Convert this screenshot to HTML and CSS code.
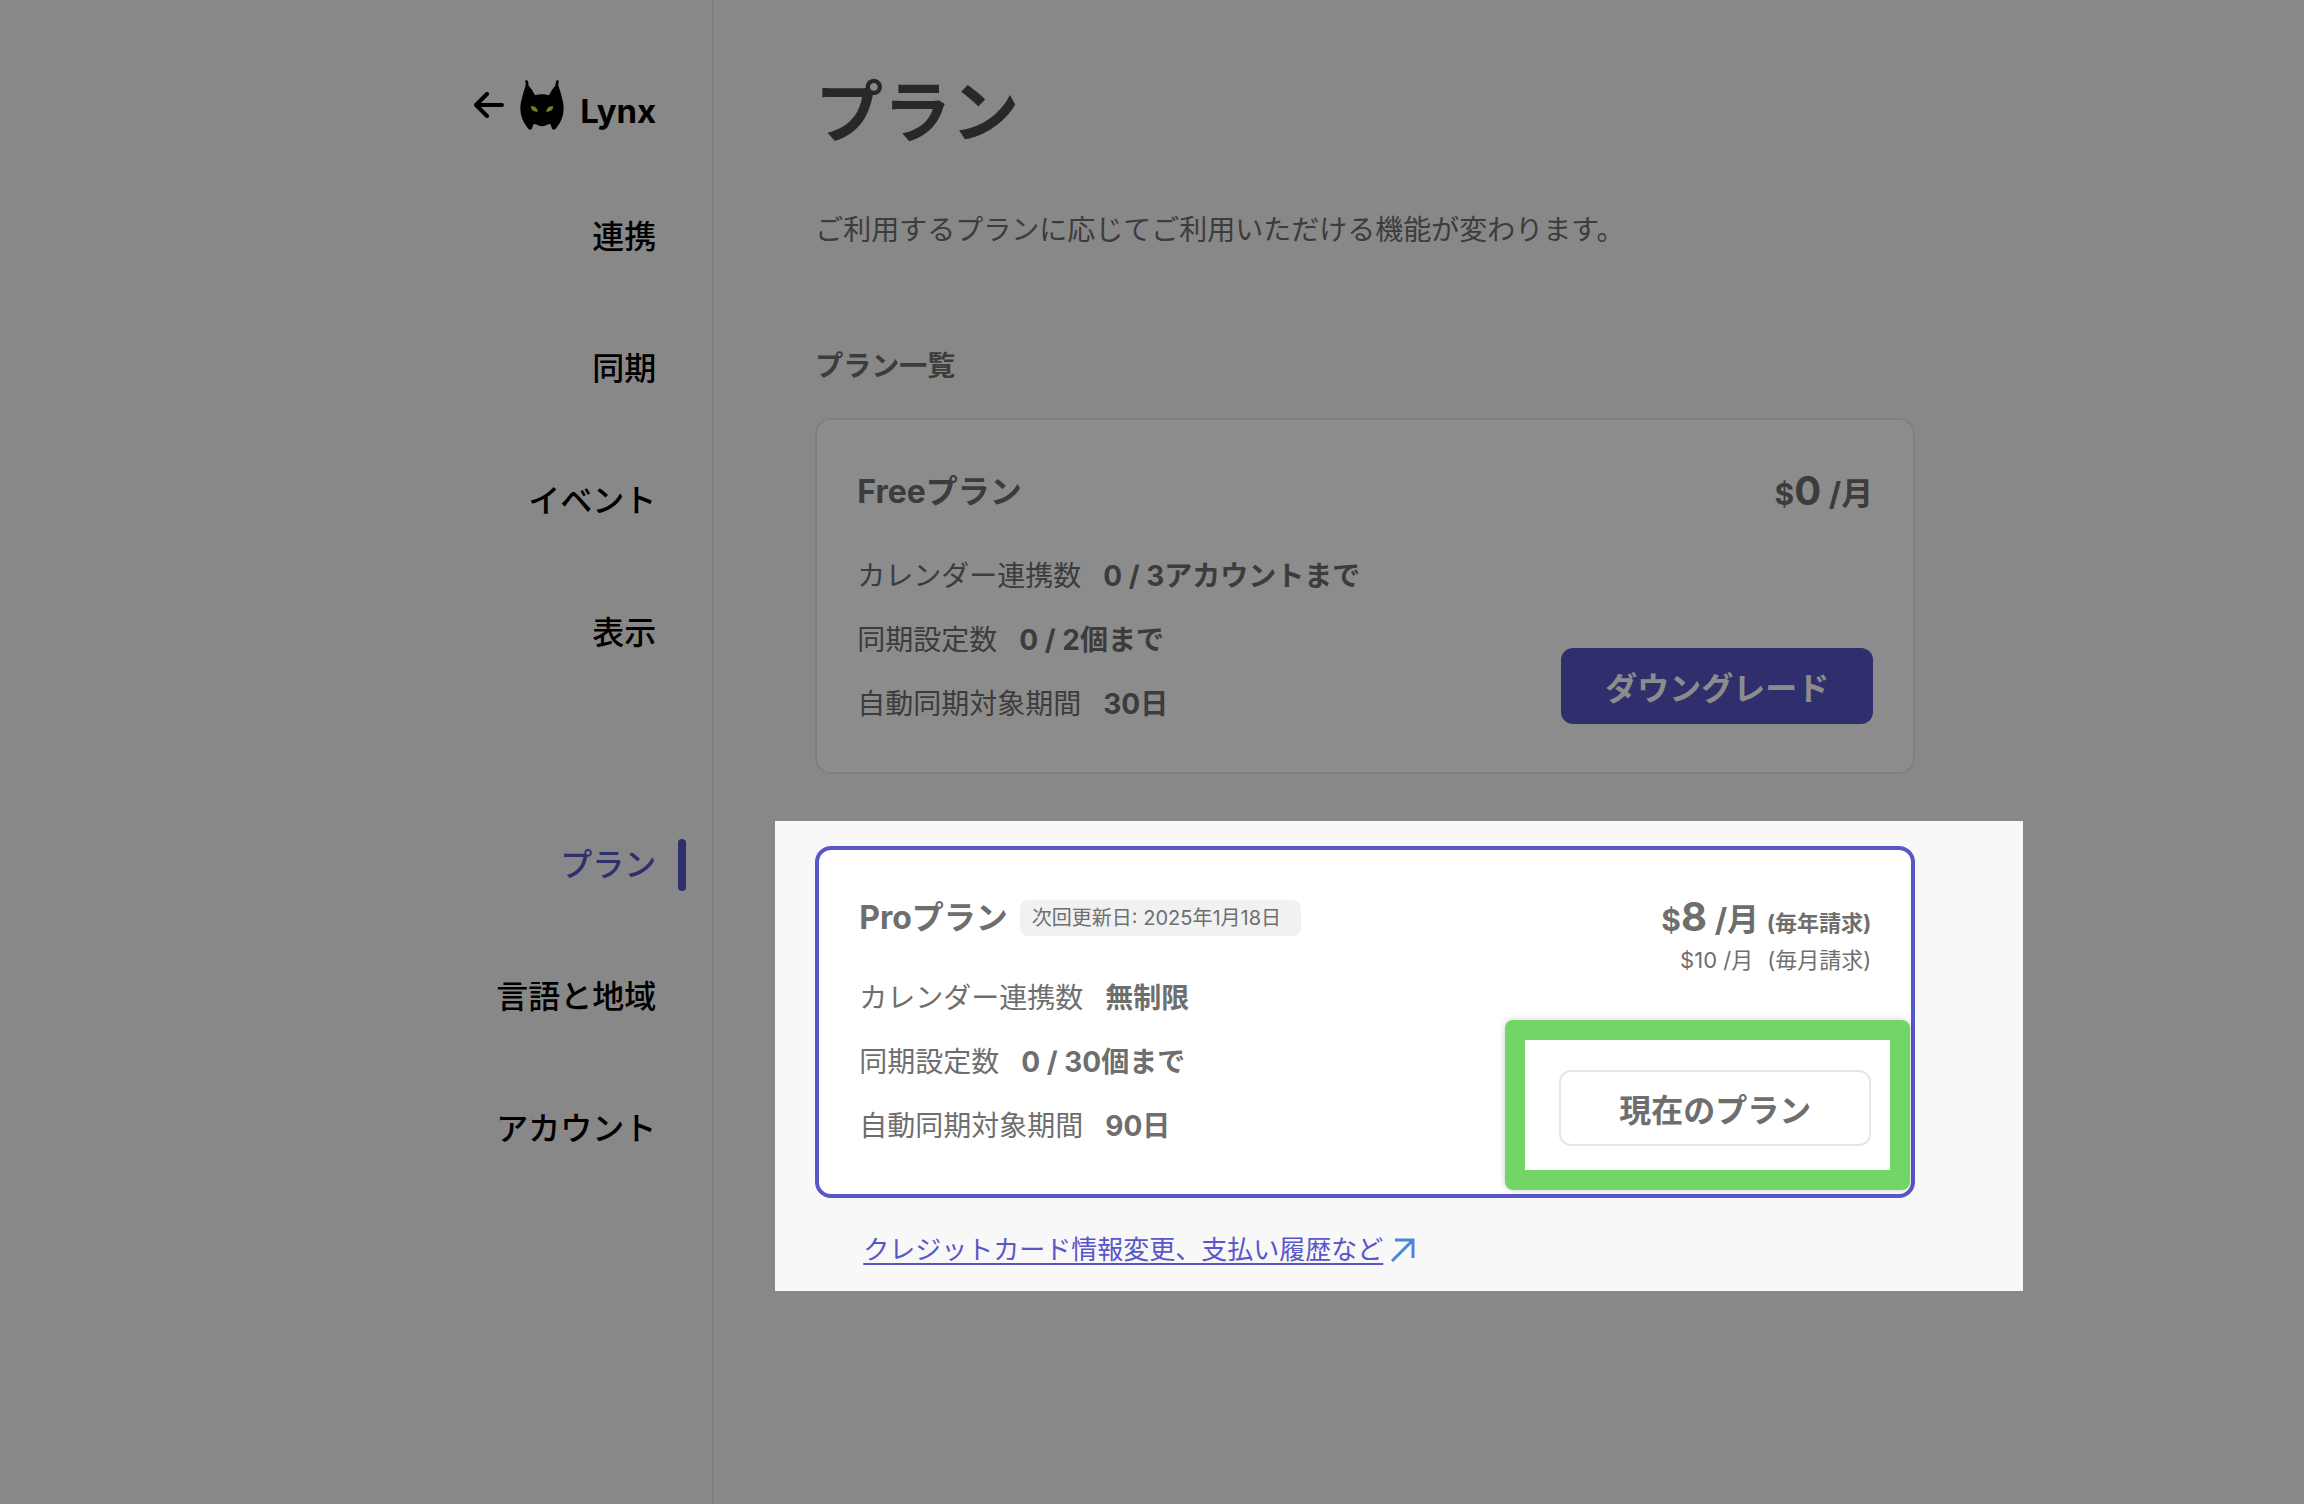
FILE: index.html
```html
<!DOCTYPE html>
<html lang="ja">
<head>
  <meta charset="UTF-8">
  <meta name="viewport" content="width=device-width, initial-scale=1">
  <title>プラン | Lynx</title>
  <link rel="stylesheet" href="styles.css">
</head>
<body>
  <div class="layout">
    <aside class="sidebar">
      <a class="brand" href="#">
        <svg class="back-icon" viewBox="0 0 30 26" aria-hidden="true">
          <path d="M28 13H2M13 2L2 13l11 11"/>
        </svg>
        <svg class="logo" viewBox="0 0 44 50" aria-hidden="true">
          <path d="M5.2 .6Q6.8-.4 8 1L8.6 5.4Q12 9 15 15.3Q22 13.2 29 15.3Q32 9 35.4 5.4L36 1Q37.2-.4 38.8 .6L38.2 5Q41 13 43 22Q46 37 35.5 49Q34 50.6 32.2 49L30.4 44Q27 44 25.5 45.6Q22 46.8 18.5 45.6Q17 44 13.6 44L11.8 49Q10 50.6 8.5 49Q-2 37 1 22Q3 13 5.8 5Z"/>
          <path class="eye" d="M10.7 26.3Q16.5 25.5 18 31.6Q11.5 32.5 10.7 26.3ZM33.3 26.3Q27.5 25.5 26 31.6Q32.5 32.5 33.3 26.3Z"/>
        </svg>
        <span class="brand-name">Lynx</span>
      </a>
      <nav class="menu">
        <a href="#">連携</a>
        <a href="#">同期</a>
        <a href="#">イベント</a>
        <a href="#">表示</a>
      </nav>
      <nav class="menu menu-account">
        <a class="active" href="#">プラン</a>
        <a href="#">言語と地域</a>
        <a href="#">アカウント</a>
      </nav>
    </aside>

    <main class="content">
      <h1>プラン</h1>
      <p class="description">ご利用するプランに応じてご利用いただける機能が変わります。</p>
      <h2>プラン一覧</h2>

      <section class="card">
        <div class="plan">
          <h3>Freeプラン</h3>
          <ul class="features">
            <li>カレンダー連携数<strong>0 / 3アカウントまで</strong></li>
            <li>同期設定数<strong>0 / 2個まで</strong></li>
            <li>自動同期対象期間<strong>30日</strong></li>
          </ul>
        </div>
        <div class="side">
          <p class="price"><span class="currency">$</span><span class="amount">0</span> /月</p>
          <button class="btn btn-primary" type="button">ダウングレード</button>
        </div>
      </section>

      <div class="current">
        <section class="card card-current">
          <div class="plan">
            <div class="plan-title">
              <h3>Proプラン</h3>
              <span class="badge">次回更新日: 2025年1月18日</span>
            </div>
            <ul class="features">
              <li>カレンダー連携数<strong>無制限</strong></li>
              <li>同期設定数<strong>0 / 30個まで</strong></li>
              <li>自動同期対象期間<strong>90日</strong></li>
            </ul>
          </div>
          <div class="side">
            <div>
              <p class="price"><span class="currency">$</span><span class="amount">8</span> /月 <span class="cycle">(毎年請求)</span></p>
              <p class="price-monthly"><span>$10 /月</span><span>(毎月請求)</span></p>
            </div>
            <div class="action">
              <button class="btn btn-outline" type="button">現在のプラン</button>
              <div class="marker"></div>
            </div>
          </div>
        </section>
        <p class="billing">
          <a href="#">クレジットカード情報変更、支払い履歴など</a>
          <svg class="external-icon" viewBox="0 0 24 24" aria-hidden="true">
            <path d="M1 23L22 2M4 2h18v18"/>
          </svg>
        </p>
        <div class="spotlight"></div>
      </div>
    </main>
  </div>
</body>
</html>
```

FILE: styles.css
```css
* {
  box-sizing: border-box;
}

body {
  margin: 0;
  font-family: Inter, "Noto Sans CJK JP", sans-serif;
  background-color: #f8f8f8;
  color: #6e6e6e;
  font-size: 28px;
  line-height: 40px;
}

h1, h2, h3, p, ul {
  margin: 0;
  padding: 0;
}

.layout {
  display: grid;
  grid-template-columns: 31fr 69fr;
  min-height: 100vh;
}

/* sidebar */
.sidebar {
  padding: 79px 26px 40px 0;
  border-right: 2px solid #e5e5e8;
}

.brand {
  display: flex;
  justify-content: flex-end;
  align-items: center;
  gap: 16px;
  height: 52px;
  padding-right: 30px;
  color: #000;
  text-decoration: none;
}

.back-icon {
  width: 30px;
  height: 26px;
  fill: none;
  stroke: #000;
  stroke-width: 4;
  stroke-linecap: round;
  stroke-linejoin: round;
}

.logo {
  width: 44px;
  height: 50px;
}

.eye {
  fill: #e0e83c;
}

.brand-name {
  align-self: flex-end;
  font-size: 33px;
  font-weight: 700;
}

.menu {
  display: flex;
  flex-direction: column;
  gap: 80px;
  margin-top: 80px;
}

.menu-account {
  margin-top: 180px;
}

.menu a {
  display: flex;
  justify-content: flex-end;
  gap: 22px;
  color: #000;
  font-size: 32px;
  font-weight: 500;
  line-height: 52px;
  text-decoration: none;
}

.menu a::after {
  content: "";
  width: 8px;
  border-radius: 4px;
}

.menu a.active {
  color: #5856c8;
}

.menu a.active::after {
  background-color: #5856c8;
}

/* content */
.content {
  max-width: 1201px;
  padding: 64px 0 64px 101px;
}

h1 {
  color: #4a4a4a;
  font-size: 68px;
  line-height: 96px;
}

.description {
  margin-top: 50px;
}

h2 {
  margin: 96px 0 32px;
  font-size: 28px;
}

.card {
  display: flex;
  justify-content: space-between;
  padding: 48px 40px;
  background-color: #fff;
  border: 2px solid #e8e8e8;
  border-radius: 16px;
}

.card-current {
  padding-top: 44px;
  border: 4px solid #5856c8;
}

h3 {
  font-size: 32px;
  line-height: 48px;
}

.plan-title {
  display: flex;
  align-items: center;
  gap: 12px;
}

.badge {
  padding: 0 20px 0 12px;
  background-color: #f1f1f1;
  border-radius: 8px;
  font-size: 20px;
  line-height: 36px;
}

.features {
  display: flex;
  flex-direction: column;
  gap: 24px;
  margin-top: 40px;
  list-style: none;
}

.card-current .features {
  margin-top: 36px;
}

.features strong {
  margin-left: 22px;
}

.side {
  display: flex;
  flex-direction: column;
  justify-content: space-between;
  align-items: flex-end;
  text-align: right;
}

.price {
  font-size: 32px;
  font-weight: 700;
  line-height: 46px;
}

.currency {
  font-size: 30px;
}

.amount {
  font-size: 40px;
}

.cycle {
  font-size: 22px;
}

.price-monthly {
  display: flex;
  justify-content: flex-end;
  gap: 14px;
  font-size: 22px;
  line-height: 28px;
}

.btn {
  display: block;
  width: 312px;
  height: 76px;
  border: none;
  border-radius: 12px;
  font-family: inherit;
  font-size: 32px;
  font-weight: 700;
  cursor: pointer;
}

.btn-primary {
  background-color: #5856c8;
  color: #fff;
}

.btn-outline {
  background-color: #fff;
  border: 2px solid #e5e5ea;
  color: #6e6e6e;
}

.current {
  position: relative;
  margin-top: 72px;
}

.action {
  position: relative;
}

/* green frame around the current plan button */
.marker {
  position: absolute;
  inset: -50px -39px -44px -54px;
  border: 20px solid #72d565;
  border-radius: 8px;
  box-shadow: 0 0 6px rgba(0, 0, 0, 0.2);
  pointer-events: none;
}

.billing {
  display: flex;
  align-items: center;
  gap: 8px;
  margin-top: 32px;
  padding-left: 48px;
  font-size: 26px;
}

.billing a {
  color: #5856c8;
  text-underline-offset: 4px;
  text-decoration-thickness: 2px;
}

.external-icon {
  width: 24px;
  height: 24px;
  fill: none;
  stroke: #4a86d8;
  stroke-width: 3;
}

/* dims everything outside of the current plan */
.spotlight {
  position: absolute;
  inset: -25px -108px -21px -40px;
  box-shadow: 0 0 0 200vmax rgba(0, 0, 0, 0.45);
  pointer-events: none;
}
```
